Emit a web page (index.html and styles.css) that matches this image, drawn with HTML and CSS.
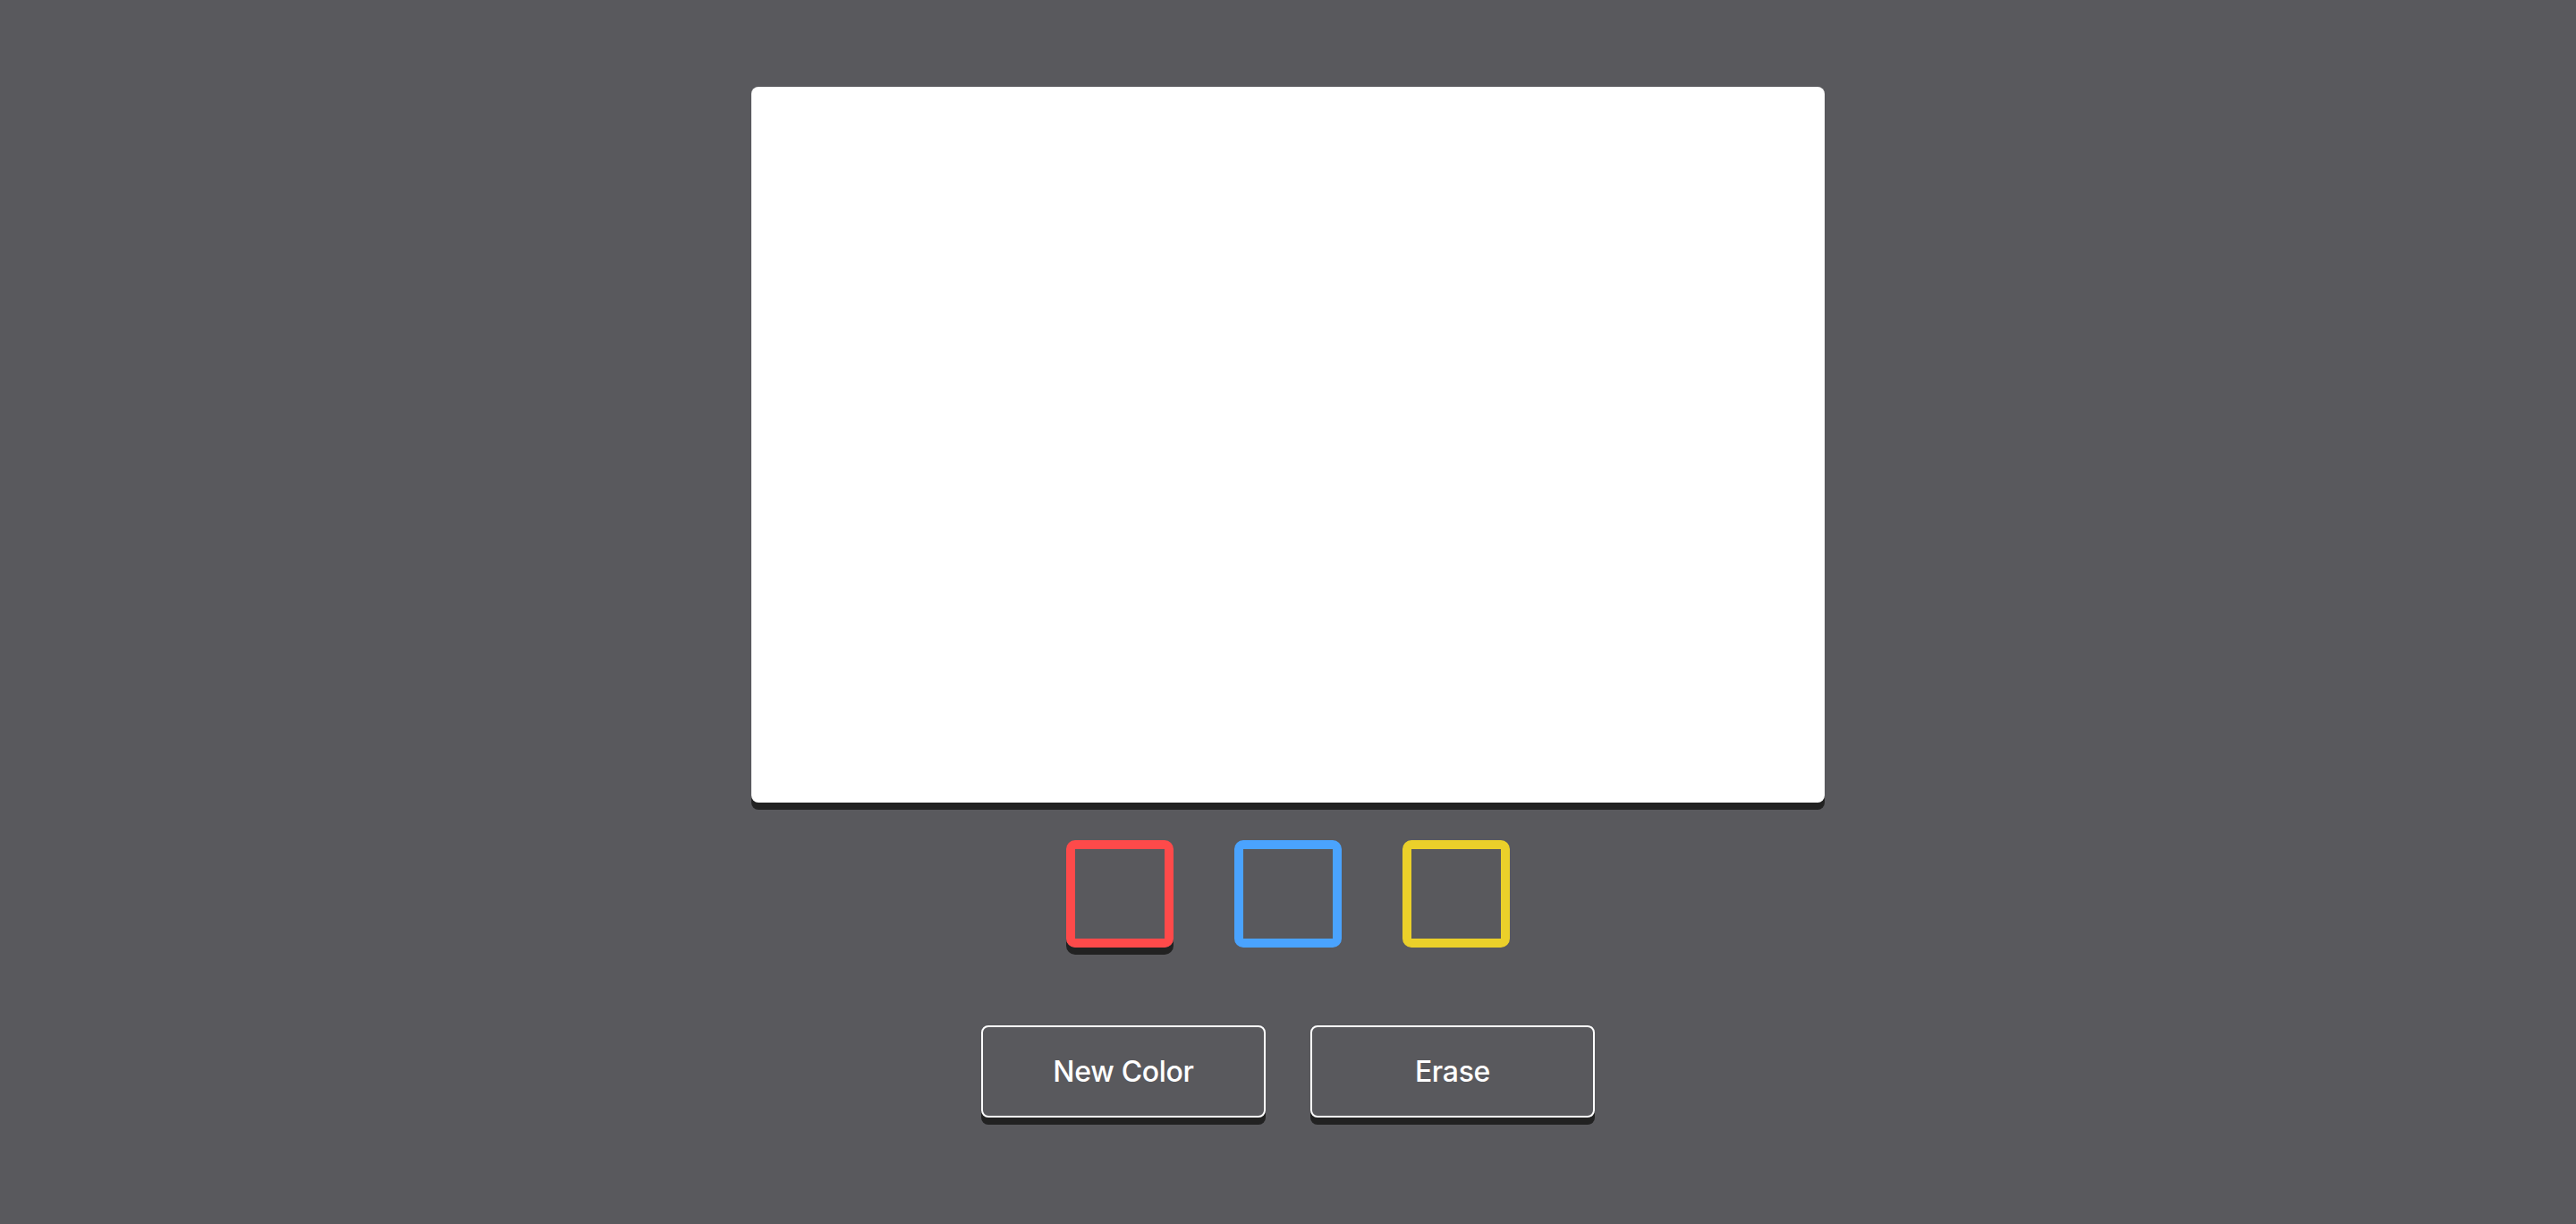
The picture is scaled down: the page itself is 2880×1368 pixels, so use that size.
FILE: index.html
```html
<!DOCTYPE html>
<html>
<head>
<meta charset="utf-8">
<link rel="stylesheet" href="styles.css">
</head>
<body>
<main class="app">
  <div class="canvas"></div>
  <div class="palette">
    <div class="swatch swatch-red selected"></div>
    <div class="swatch swatch-blue"></div>
    <div class="swatch swatch-yellow"></div>
  </div>
  <div class="actions">
    <button class="btn">New Color</button>
    <button class="btn">Erase</button>
  </div>
</main>
</body>
</html>
```
FILE: styles.css
```css
html, body {
  margin: 0;
  padding: 0;
  background: #59595d;
  height: 100%;
}
body {
  font-family: Inter, "Liberation Sans", Arial, sans-serif;
}
.app {
  display: flex;
  flex-direction: column;
  align-items: center;
  padding-top: 97px;
}
.canvas {
  width: 1200px;
  height: 800px;
  background: #ffffff;
  border-radius: 8px;
  box-shadow: 0 8px 0 #222222;
}
.palette {
  display: flex;
  gap: 68px;
  margin-top: 42px;
}
.swatch {
  width: 120px;
  height: 120px;
  box-sizing: border-box;
  border: 10px solid;
  border-radius: 10px;
}
.swatch.selected {
  box-shadow: 0 8px 0 #222222;
}
.swatch-red { border-color: #fe4a4a; }
.swatch-blue { border-color: #4aa3fe; }
.swatch-yellow { border-color: #ebd02a; }
.actions {
  display: flex;
  gap: 50px;
  margin-top: 87px;
}
.btn {
  width: 318px;
  height: 103px;
  box-sizing: border-box;
  border: 2px solid #ffffff;
  border-radius: 8px;
  background: #59595d;
  color: #ffffff;
  font-family: Inter, "Liberation Sans", Arial, sans-serif;
  font-weight: 500;
  font-size: 32px;
  letter-spacing: -0.3px;
  box-shadow: 0 8px 0 #222222;
  padding: 0;
}
```
